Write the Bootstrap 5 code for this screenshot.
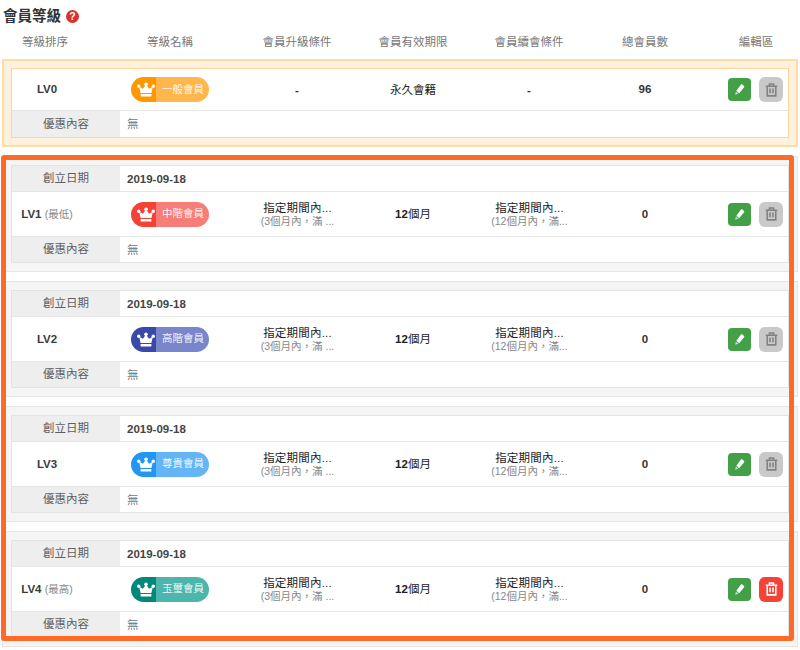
<!DOCTYPE html>
<html lang="zh-Hant">
<head>
<meta charset="utf-8">
<title>會員等級</title>
<link href="https://cdn.jsdelivr.net/npm/bootstrap@5.3.0/dist/css/bootstrap.min.css" rel="stylesheet">
<style>
body{background:#fff;font-family:"Liberation Sans","Noto Sans CJK TC",sans-serif;font-size:11.5px;color:#333;overflow:hidden}
.pg-wrap{position:relative;padding:0 2px;height:650px}
.pg-title{height:33px;padding-left:1px;font-size:14.5px;font-weight:700;color:#333;line-height:33px}
.help-dot{width:13px;height:13px;border-radius:50%;background:#d9322e;color:#fff;font-size:10.5px;font-weight:700;line-height:13px;margin-left:5px}
.head-row{height:19px;margin-bottom:7px;color:#777;padding:0 9px 0 10px}
.head-row .c1{padding-right:4px}
.head-row .c7{padding-left:25px}
.tier{border:1px solid #e6e6e6;background:#f5f5f5;padding:8px;margin-bottom:9px}
.tier-base{border:2px solid #ffdba6;background:#fff1de;padding:7px}
.sheet{background:#fff;border:1px solid #e3e3e3}
.tier-base .sheet{border-color:#ffd599}
.line{border-top:1px solid #e6e6e6}
.sheet .line:first-child{border-top:0}
.lab{width:108px;background:#eee;color:#5f5f5f;flex:none;text-align:center;padding-top:1px}
.val{padding-left:7px;padding-top:2px}
.h25{height:26px}.h41{height:41px}.h44{height:45px}
.sheet .line.h25:first-child{height:25px}
.tier-base .line.h25{height:27px}
.c1{width:70px;flex:none}
.c2{width:116px;margin-left:30px;flex:none}
.c3{width:116px;margin-left:11px;flex:none}
.c4,.c5,.c6{width:116px;flex:none}
.c7{flex:1 1 0;padding-right:5px;gap:8px}
.lift{padding-top:2px}
.lv{font-weight:700;font-size:11.5px;color:#3a3a3a}
.lv small{font-weight:400;font-size:10.5px;color:#888}
.tag{width:78px;height:25px;border-radius:13px;overflow:hidden;color:#fff;font-size:10.5px}
.tag-ic{width:25px;height:25px;padding-left:4px}
.tag-tx{flex:1 1 0;padding-left:1px;color:rgba(255,255,255,.92)}
.t-or .tag-ic{background:#ff9800}.t-or .tag-tx{background:#ffb74d}
.t-re .tag-ic{background:#f44336}.t-re .tag-tx{background:#f77e78}
.t-in .tag-ic{background:#3949ab}.t-in .tag-tx{background:#7986cb}
.t-bl .tag-ic{background:#2196f3}.t-bl .tag-tx{background:#64b5f6}
.t-te .tag-ic{background:#00897b}.t-te .tag-tx{background:#4db6ac}
.cond{line-height:14px;color:#222;font-weight:400;letter-spacing:.2px;padding-top:1px;padding-left:1px}
.cond span{display:block;font-size:10.5px;color:#888;font-weight:400;line-height:13px;letter-spacing:0}
.strong{font-weight:700;color:#333}
.soft{font-weight:400;color:#222}
.soft b{font-weight:700}
.when{font-weight:700;color:#444}
.act{border:0;padding:0;width:24px;height:25px;border-radius:6px;display:flex;align-items:center;justify-content:center}
.act-ed{background:#43a047;width:23px;height:23px;border-radius:4px}
.act-off{background:#c9c9c9;color:#828282}
.act-del{background:#f44336;color:#fff}
.muted-no{color:#777}
.frame{position:absolute;left:1px;top:155px;width:793px;height:486px;border:5px solid #ff6a26;border-radius:3px;pointer-events:none}
</style>
</head>
<body>
<svg width="0" height="0" class="position-absolute">
<defs>
<symbol id="crown" viewBox="0 0 20 16"><path fill="#fff" d="M2.4 5 6.6 7.2 10 2.4l3.4 4.8L17.6 5l-1.6 7H4z"/><circle cx="10" cy="2.2" r="2" fill="#fff"/><circle cx="1.9" cy="4.4" r="1.9" fill="#fff"/><circle cx="18.1" cy="4.4" r="1.9" fill="#fff"/><rect x="4" y="12.9" width="12" height="3" rx=".7" fill="#fff"/></symbol>
<symbol id="pen" viewBox="0 0 12 12"><path fill="#fff" d="M7.4.8c.5-.5 1.2-.6 1.7-.2l1.6 1.2c.6.4.7 1.2.3 1.8L5.6 10 2.6 7.4z"/><path fill="#a8e6d6" d="M2.1 8.1 4.9 10.6 1.2 11.6z"/></symbol>
<symbol id="bin" viewBox="0 0 14 15"><path fill="none" stroke="currentColor" stroke-width="1.7" d="M.8 3.4h12.4M2.4 3.4v10.4h9.2V3.4M4.8 3.2V1.1h4.4v2.1M5.4 6v5M8.6 6v5"/></symbol>
</defs>
</svg>
<div class="pg-wrap">
  <div class="pg-title d-flex align-items-center">會員等級<span class="help-dot text-center">?</span></div>
  <div class="head-row d-flex align-items-center text-center">
    <div class="c1">等級排序</div><div class="c2">等級名稱</div><div class="c3">會員升級條件</div><div class="c4">會員有效期限</div><div class="c5">會員續會條件</div><div class="c6">總會員數</div><div class="c7">編輯區</div>
  </div>

  <div class="tier tier-base">
    <div class="sheet">
      <div class="line d-flex align-items-center text-center h41">
        <div class="c1 lv">LV0</div>
        <div class="c2 d-flex justify-content-center"><div class="tag t-or d-flex"><div class="tag-ic d-flex align-items-center justify-content-center"><svg width="18" height="15"><use href="#crown"/></svg></div><div class="tag-tx d-flex align-items-center justify-content-center">一般會員</div></div></div>
        <div class="c3 strong lift">-</div><div class="c4 soft lift">永久會籍</div><div class="c5 strong lift">-</div><div class="c6 strong">96</div>
        <div class="c7 d-flex justify-content-end align-items-center"><button class="act act-ed"><svg width="11" height="11"><use href="#pen"/></svg></button><button class="act act-off"><svg width="13" height="14"><use href="#bin"/></svg></button></div>
      </div>
      <div class="line d-flex align-items-center h25"><div class="lab h-100 d-flex align-items-center justify-content-center">優惠內容</div><div class="val muted-no">無</div></div>
    </div>
  </div>

  <div class="tier">
    <div class="sheet">
      <div class="line d-flex align-items-center h25"><div class="lab h-100 d-flex align-items-center justify-content-center">創立日期</div><div class="val when">2019-09-18</div></div>
      <div class="line d-flex align-items-center text-center h44">
        <div class="c1 lv lift">LV1 <small>(最低)</small></div>
        <div class="c2 d-flex justify-content-center"><div class="tag t-re d-flex"><div class="tag-ic d-flex align-items-center justify-content-center"><svg width="18" height="15"><use href="#crown"/></svg></div><div class="tag-tx d-flex align-items-center justify-content-center">中階會員</div></div></div>
        <div class="c3 cond">指定期間內...<span>(3個月內&#xFF0C;滿 ...</span></div><div class="c4 soft lift"><b>12</b>個月</div><div class="c5 cond">指定期間內...<span>(12個月內&#xFF0C;滿...</span></div><div class="c6 strong lift">0</div>
        <div class="c7 d-flex justify-content-end align-items-center"><button class="act act-ed"><svg width="11" height="11"><use href="#pen"/></svg></button><button class="act act-off"><svg width="13" height="14"><use href="#bin"/></svg></button></div>
      </div>
      <div class="line d-flex align-items-center h25"><div class="lab h-100 d-flex align-items-center justify-content-center">優惠內容</div><div class="val muted-no">無</div></div>
    </div>
  </div>

  <div class="tier">
    <div class="sheet">
      <div class="line d-flex align-items-center h25"><div class="lab h-100 d-flex align-items-center justify-content-center">創立日期</div><div class="val when">2019-09-18</div></div>
      <div class="line d-flex align-items-center text-center h44">
        <div class="c1 lv lift">LV2</div>
        <div class="c2 d-flex justify-content-center"><div class="tag t-in d-flex"><div class="tag-ic d-flex align-items-center justify-content-center"><svg width="18" height="15"><use href="#crown"/></svg></div><div class="tag-tx d-flex align-items-center justify-content-center">高階會員</div></div></div>
        <div class="c3 cond">指定期間內...<span>(3個月內&#xFF0C;滿 ...</span></div><div class="c4 soft lift"><b>12</b>個月</div><div class="c5 cond">指定期間內...<span>(12個月內&#xFF0C;滿...</span></div><div class="c6 strong lift">0</div>
        <div class="c7 d-flex justify-content-end align-items-center"><button class="act act-ed"><svg width="11" height="11"><use href="#pen"/></svg></button><button class="act act-off"><svg width="13" height="14"><use href="#bin"/></svg></button></div>
      </div>
      <div class="line d-flex align-items-center h25"><div class="lab h-100 d-flex align-items-center justify-content-center">優惠內容</div><div class="val muted-no">無</div></div>
    </div>
  </div>

  <div class="tier">
    <div class="sheet">
      <div class="line d-flex align-items-center h25"><div class="lab h-100 d-flex align-items-center justify-content-center">創立日期</div><div class="val when">2019-09-18</div></div>
      <div class="line d-flex align-items-center text-center h44">
        <div class="c1 lv lift">LV3</div>
        <div class="c2 d-flex justify-content-center"><div class="tag t-bl d-flex"><div class="tag-ic d-flex align-items-center justify-content-center"><svg width="18" height="15"><use href="#crown"/></svg></div><div class="tag-tx d-flex align-items-center justify-content-center">尊貴會員</div></div></div>
        <div class="c3 cond">指定期間內...<span>(3個月內&#xFF0C;滿 ...</span></div><div class="c4 soft lift"><b>12</b>個月</div><div class="c5 cond">指定期間內...<span>(12個月內&#xFF0C;滿...</span></div><div class="c6 strong lift">0</div>
        <div class="c7 d-flex justify-content-end align-items-center"><button class="act act-ed"><svg width="11" height="11"><use href="#pen"/></svg></button><button class="act act-off"><svg width="13" height="14"><use href="#bin"/></svg></button></div>
      </div>
      <div class="line d-flex align-items-center h25"><div class="lab h-100 d-flex align-items-center justify-content-center">優惠內容</div><div class="val muted-no">無</div></div>
    </div>
  </div>

  <div class="tier">
    <div class="sheet">
      <div class="line d-flex align-items-center h25"><div class="lab h-100 d-flex align-items-center justify-content-center">創立日期</div><div class="val when">2019-09-18</div></div>
      <div class="line d-flex align-items-center text-center h44">
        <div class="c1 lv lift">LV4 <small>(最高)</small></div>
        <div class="c2 d-flex justify-content-center"><div class="tag t-te d-flex"><div class="tag-ic d-flex align-items-center justify-content-center"><svg width="18" height="15"><use href="#crown"/></svg></div><div class="tag-tx d-flex align-items-center justify-content-center">玉璽會員</div></div></div>
        <div class="c3 cond">指定期間內...<span>(3個月內&#xFF0C;滿 ...</span></div><div class="c4 soft lift"><b>12</b>個月</div><div class="c5 cond">指定期間內...<span>(12個月內&#xFF0C;滿...</span></div><div class="c6 strong lift">0</div>
        <div class="c7 d-flex justify-content-end align-items-center"><button class="act act-ed"><svg width="11" height="11"><use href="#pen"/></svg></button><button class="act act-del"><svg width="13" height="14"><use href="#bin"/></svg></button></div>
      </div>
      <div class="line d-flex align-items-center h25"><div class="lab h-100 d-flex align-items-center justify-content-center">優惠內容</div><div class="val muted-no">無</div></div>
    </div>
  </div>

  <div class="frame"></div>
</div>
<script src="https://cdn.jsdelivr.net/npm/bootstrap@5.3.0/dist/js/bootstrap.bundle.min.js"></script>
</body>
</html>
